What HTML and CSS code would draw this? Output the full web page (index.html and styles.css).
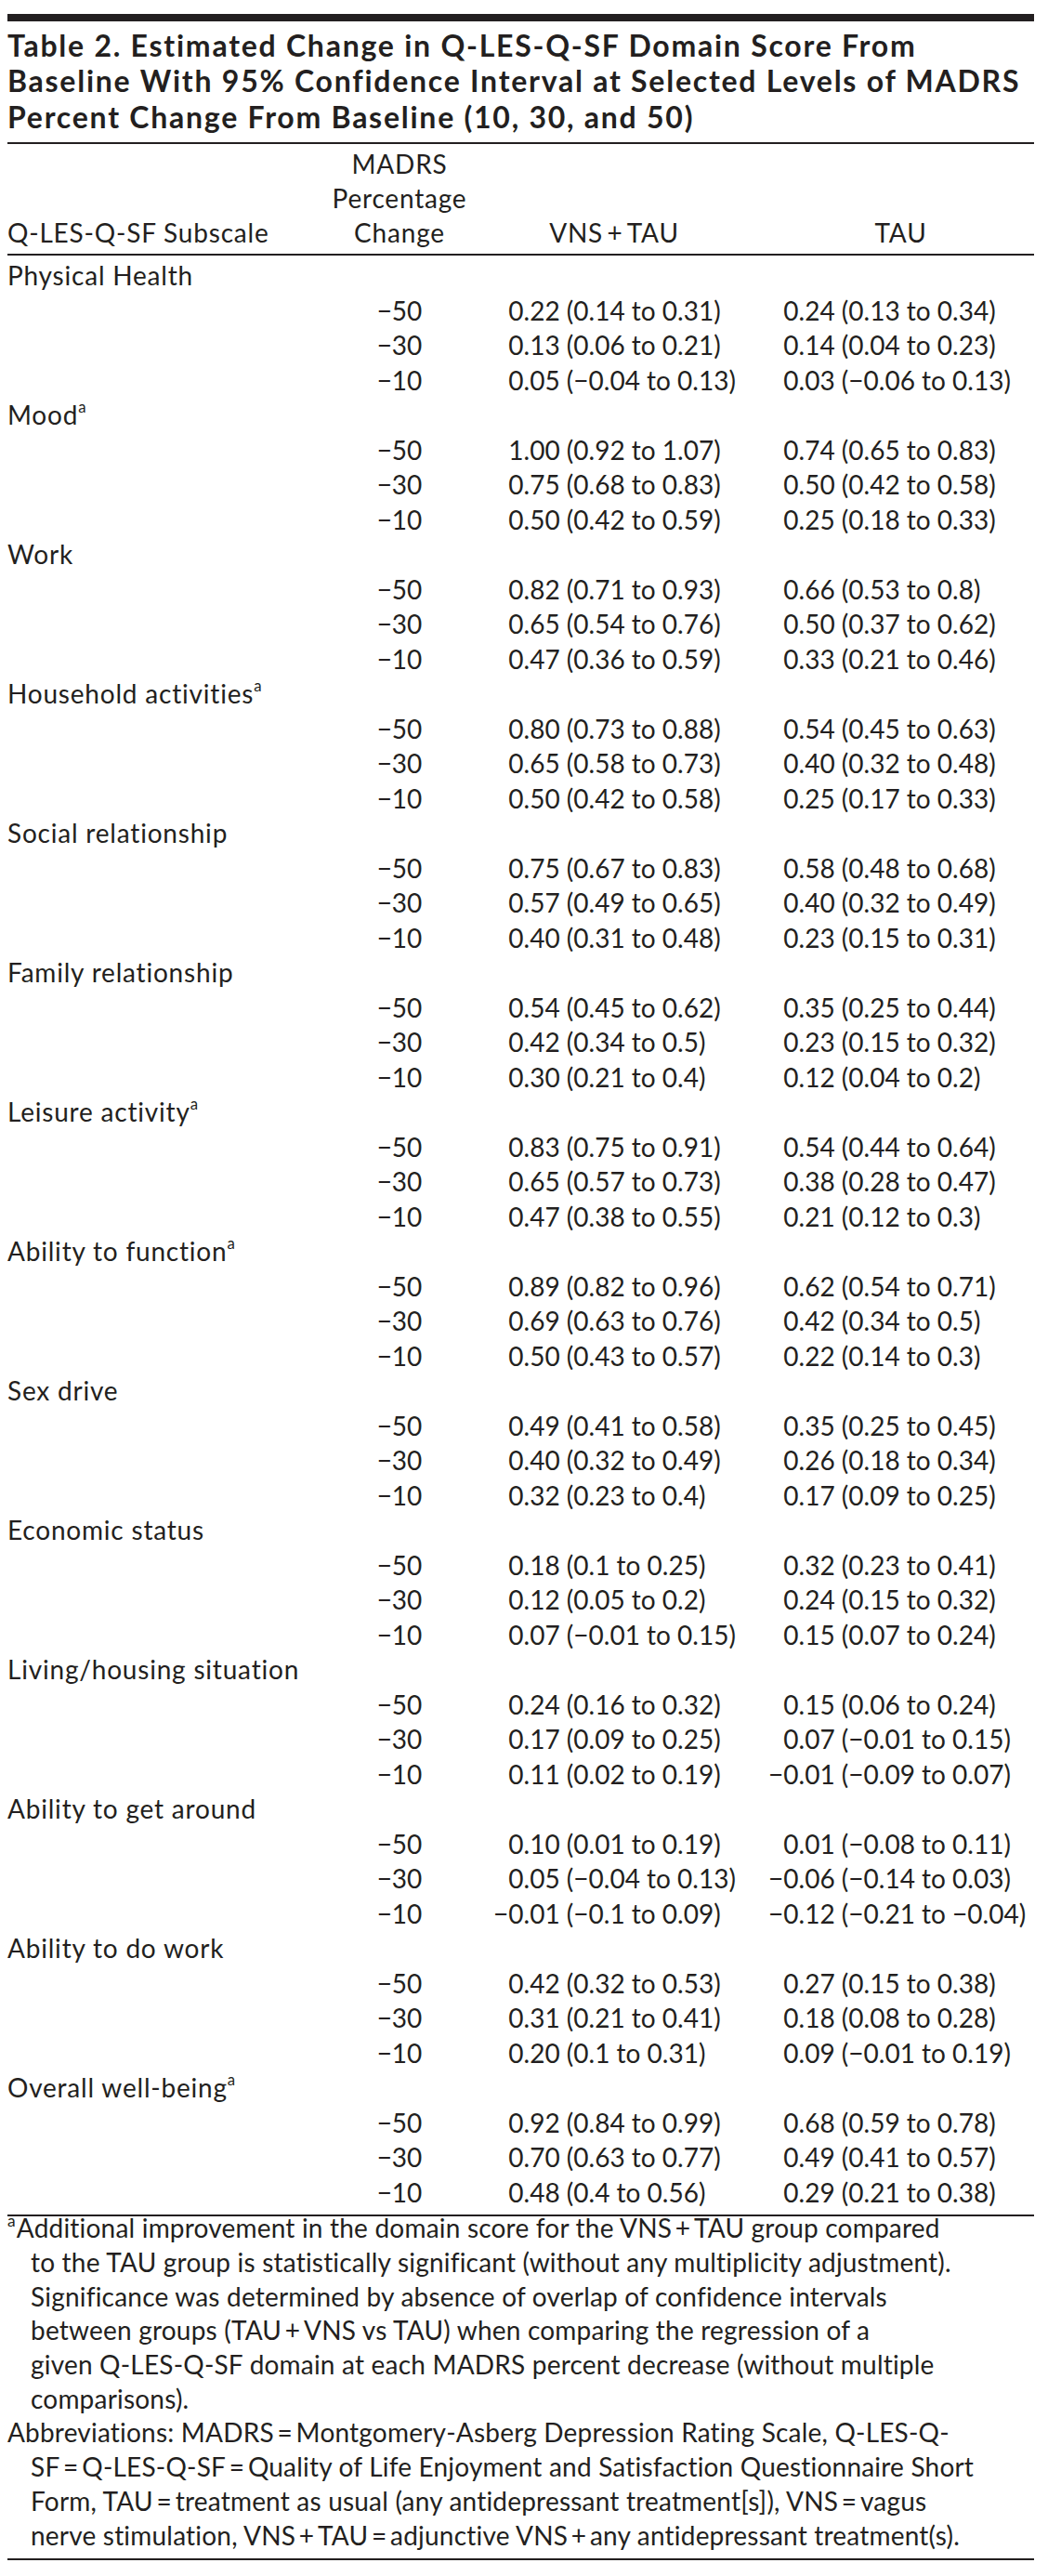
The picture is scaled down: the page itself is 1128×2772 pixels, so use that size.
FILE: index.html
```html
<!DOCTYPE html>
<html lang="en">
<head>
<meta charset="utf-8">
<title>Table 2</title>
<link rel="stylesheet" href="styles.css">
</head>
<body>
<div class="page">
  <div class="topbar"></div>
  <h1 class="title">Table 2. Estimated Change in Q-LES-Q-SF Domain Score From<br>Baseline With 95% Confidence Interval at Selected Levels of MADRS<br>Percent Change From Baseline (10, 30, and 50)</h1>
  <table class="data">
    <colgroup>
      <col class="w1"><col class="w2"><col class="w3"><col class="w4">
    </colgroup>
    <thead>
      <tr>
        <th class="h1">Q-LES-Q-SF Subscale</th>
        <th class="h2">MADRS<br>Percentage<br>Change</th>
        <th class="h3">VNS&#8201;+&#8201;TAU</th>
        <th class="h4">TAU</th>
      </tr>
    </thead>
    <tbody>
      <tr><td class="sec" colspan="4">Physical Health</td></tr>
      <tr><td></td><td class="m">−50</td><td class="v"><span class="i">0</span>.22 (0.14 to 0.31)</td><td class="v"><span class="i">0</span>.24 (0.13 to 0.34)</td></tr>
      <tr><td></td><td class="m">−30</td><td class="v"><span class="i">0</span>.13 (0.06 to 0.21)</td><td class="v"><span class="i">0</span>.14 (0.04 to 0.23)</td></tr>
      <tr><td></td><td class="m">−10</td><td class="v"><span class="i">0</span>.05 (−0.04 to 0.13)</td><td class="v"><span class="i">0</span>.03 (−0.06 to 0.13)</td></tr>

      <tr><td class="sec" colspan="4">Mood<span class="sup">a</span></td></tr>
      <tr><td></td><td class="m">−50</td><td class="v"><span class="i">1</span>.00 (0.92 to 1.07)</td><td class="v"><span class="i">0</span>.74 (0.65 to 0.83)</td></tr>
      <tr><td></td><td class="m">−30</td><td class="v"><span class="i">0</span>.75 (0.68 to 0.83)</td><td class="v"><span class="i">0</span>.50 (0.42 to 0.58)</td></tr>
      <tr><td></td><td class="m">−10</td><td class="v"><span class="i">0</span>.50 (0.42 to 0.59)</td><td class="v"><span class="i">0</span>.25 (0.18 to 0.33)</td></tr>

      <tr><td class="sec" colspan="4">Work</td></tr>
      <tr><td></td><td class="m">−50</td><td class="v"><span class="i">0</span>.82 (0.71 to 0.93)</td><td class="v"><span class="i">0</span>.66 (0.53 to 0.8)</td></tr>
      <tr><td></td><td class="m">−30</td><td class="v"><span class="i">0</span>.65 (0.54 to 0.76)</td><td class="v"><span class="i">0</span>.50 (0.37 to 0.62)</td></tr>
      <tr><td></td><td class="m">−10</td><td class="v"><span class="i">0</span>.47 (0.36 to 0.59)</td><td class="v"><span class="i">0</span>.33 (0.21 to 0.46)</td></tr>

      <tr><td class="sec" colspan="4">Household activities<span class="sup">a</span></td></tr>
      <tr><td></td><td class="m">−50</td><td class="v"><span class="i">0</span>.80 (0.73 to 0.88)</td><td class="v"><span class="i">0</span>.54 (0.45 to 0.63)</td></tr>
      <tr><td></td><td class="m">−30</td><td class="v"><span class="i">0</span>.65 (0.58 to 0.73)</td><td class="v"><span class="i">0</span>.40 (0.32 to 0.48)</td></tr>
      <tr><td></td><td class="m">−10</td><td class="v"><span class="i">0</span>.50 (0.42 to 0.58)</td><td class="v"><span class="i">0</span>.25 (0.17 to 0.33)</td></tr>

      <tr><td class="sec" colspan="4">Social relationship</td></tr>
      <tr><td></td><td class="m">−50</td><td class="v"><span class="i">0</span>.75 (0.67 to 0.83)</td><td class="v"><span class="i">0</span>.58 (0.48 to 0.68)</td></tr>
      <tr><td></td><td class="m">−30</td><td class="v"><span class="i">0</span>.57 (0.49 to 0.65)</td><td class="v"><span class="i">0</span>.40 (0.32 to 0.49)</td></tr>
      <tr><td></td><td class="m">−10</td><td class="v"><span class="i">0</span>.40 (0.31 to 0.48)</td><td class="v"><span class="i">0</span>.23 (0.15 to 0.31)</td></tr>

      <tr><td class="sec" colspan="4">Family relationship</td></tr>
      <tr><td></td><td class="m">−50</td><td class="v"><span class="i">0</span>.54 (0.45 to 0.62)</td><td class="v"><span class="i">0</span>.35 (0.25 to 0.44)</td></tr>
      <tr><td></td><td class="m">−30</td><td class="v"><span class="i">0</span>.42 (0.34 to 0.5)</td><td class="v"><span class="i">0</span>.23 (0.15 to 0.32)</td></tr>
      <tr><td></td><td class="m">−10</td><td class="v"><span class="i">0</span>.30 (0.21 to 0.4)</td><td class="v"><span class="i">0</span>.12 (0.04 to 0.2)</td></tr>

      <tr><td class="sec" colspan="4">Leisure activity<span class="sup">a</span></td></tr>
      <tr><td></td><td class="m">−50</td><td class="v"><span class="i">0</span>.83 (0.75 to 0.91)</td><td class="v"><span class="i">0</span>.54 (0.44 to 0.64)</td></tr>
      <tr><td></td><td class="m">−30</td><td class="v"><span class="i">0</span>.65 (0.57 to 0.73)</td><td class="v"><span class="i">0</span>.38 (0.28 to 0.47)</td></tr>
      <tr><td></td><td class="m">−10</td><td class="v"><span class="i">0</span>.47 (0.38 to 0.55)</td><td class="v"><span class="i">0</span>.21 (0.12 to 0.3)</td></tr>

      <tr><td class="sec" colspan="4">Ability to function<span class="sup">a</span></td></tr>
      <tr><td></td><td class="m">−50</td><td class="v"><span class="i">0</span>.89 (0.82 to 0.96)</td><td class="v"><span class="i">0</span>.62 (0.54 to 0.71)</td></tr>
      <tr><td></td><td class="m">−30</td><td class="v"><span class="i">0</span>.69 (0.63 to 0.76)</td><td class="v"><span class="i">0</span>.42 (0.34 to 0.5)</td></tr>
      <tr><td></td><td class="m">−10</td><td class="v"><span class="i">0</span>.50 (0.43 to 0.57)</td><td class="v"><span class="i">0</span>.22 (0.14 to 0.3)</td></tr>

      <tr><td class="sec" colspan="4">Sex drive</td></tr>
      <tr><td></td><td class="m">−50</td><td class="v"><span class="i">0</span>.49 (0.41 to 0.58)</td><td class="v"><span class="i">0</span>.35 (0.25 to 0.45)</td></tr>
      <tr><td></td><td class="m">−30</td><td class="v"><span class="i">0</span>.40 (0.32 to 0.49)</td><td class="v"><span class="i">0</span>.26 (0.18 to 0.34)</td></tr>
      <tr><td></td><td class="m">−10</td><td class="v"><span class="i">0</span>.32 (0.23 to 0.4)</td><td class="v"><span class="i">0</span>.17 (0.09 to 0.25)</td></tr>

      <tr><td class="sec" colspan="4">Economic status</td></tr>
      <tr><td></td><td class="m">−50</td><td class="v"><span class="i">0</span>.18 (0.1 to 0.25)</td><td class="v"><span class="i">0</span>.32 (0.23 to 0.41)</td></tr>
      <tr><td></td><td class="m">−30</td><td class="v"><span class="i">0</span>.12 (0.05 to 0.2)</td><td class="v"><span class="i">0</span>.24 (0.15 to 0.32)</td></tr>
      <tr><td></td><td class="m">−10</td><td class="v"><span class="i">0</span>.07 (−0.01 to 0.15)</td><td class="v"><span class="i">0</span>.15 (0.07 to 0.24)</td></tr>

      <tr><td class="sec" colspan="4">Living/housing situation</td></tr>
      <tr><td></td><td class="m">−50</td><td class="v"><span class="i">0</span>.24 (0.16 to 0.32)</td><td class="v"><span class="i">0</span>.15 (0.06 to 0.24)</td></tr>
      <tr><td></td><td class="m">−30</td><td class="v"><span class="i">0</span>.17 (0.09 to 0.25)</td><td class="v"><span class="i">0</span>.07 (−0.01 to 0.15)</td></tr>
      <tr><td></td><td class="m">−10</td><td class="v"><span class="i">0</span>.11 (0.02 to 0.19)</td><td class="v"><span class="i">−0</span>.01 (−0.09 to 0.07)</td></tr>

      <tr><td class="sec" colspan="4">Ability to get around</td></tr>
      <tr><td></td><td class="m">−50</td><td class="v"><span class="i">0</span>.10 (0.01 to 0.19)</td><td class="v"><span class="i">0</span>.01 (−0.08 to 0.11)</td></tr>
      <tr><td></td><td class="m">−30</td><td class="v"><span class="i">0</span>.05 (−0.04 to 0.13)</td><td class="v"><span class="i">−0</span>.06 (−0.14 to 0.03)</td></tr>
      <tr><td></td><td class="m">−10</td><td class="v"><span class="i">−0</span>.01 (−0.1 to 0.09)</td><td class="v"><span class="i">−0</span>.12 (−0.21 to −0.04)</td></tr>

      <tr><td class="sec" colspan="4">Ability to do work</td></tr>
      <tr><td></td><td class="m">−50</td><td class="v"><span class="i">0</span>.42 (0.32 to 0.53)</td><td class="v"><span class="i">0</span>.27 (0.15 to 0.38)</td></tr>
      <tr><td></td><td class="m">−30</td><td class="v"><span class="i">0</span>.31 (0.21 to 0.41)</td><td class="v"><span class="i">0</span>.18 (0.08 to 0.28)</td></tr>
      <tr><td></td><td class="m">−10</td><td class="v"><span class="i">0</span>.20 (0.1 to 0.31)</td><td class="v"><span class="i">0</span>.09 (−0.01 to 0.19)</td></tr>

      <tr><td class="sec" colspan="4">Overall well-being<span class="sup">a</span></td></tr>
      <tr><td></td><td class="m">−50</td><td class="v"><span class="i">0</span>.92 (0.84 to 0.99)</td><td class="v"><span class="i">0</span>.68 (0.59 to 0.78)</td></tr>
      <tr><td></td><td class="m">−30</td><td class="v"><span class="i">0</span>.70 (0.63 to 0.77)</td><td class="v"><span class="i">0</span>.49 (0.41 to 0.57)</td></tr>
      <tr class="last"><td></td><td class="m">−10</td><td class="v"><span class="i">0</span>.48 (0.4 to 0.56)</td><td class="v"><span class="i">0</span>.29 (0.21 to 0.38)</td></tr>
    </tbody>
  </table>
  <div class="notes">
    <p class="note"><span class="nsup">a</span>Additional improvement in the domain score for the VNS&#8201;+&#8201;TAU group compared<br>to the TAU group is statistically significant (without any multiplicity adjustment).<br>Significance was determined by absence of overlap of confidence intervals<br>between groups (TAU&#8201;+&#8201;VNS vs TAU) when comparing the regression of a<br>given Q-LES-Q-SF domain at each MADRS percent decrease (without multiple<br>comparisons).</p>
    <p class="note">Abbreviations: MADRS&#8201;=&#8201;Montgomery-Asberg Depression Rating Scale, Q-LES-Q-<br>SF&#8201;=&#8201;Q-LES-Q-SF&#8201;=&#8201;Quality of Life Enjoyment and Satisfaction Questionnaire Short<br>Form, TAU&#8201;=&#8201;treatment as usual (any antidepressant treatment[s]), VNS&#8201;=&#8201;vagus<br>nerve stimulation, VNS&#8201;+&#8201;TAU&#8201;=&#8201;adjunctive VNS&#8201;+&#8201;any antidepressant treatment(s).</p>
  </div>
</div>
</body>
</html>
```

FILE: styles.css
```css
html, body {
  margin: 0;
  padding: 0;
  background: #ffffff;
}

body {
  font-family: Lato, "Open Sans", sans-serif;
  color: #231f20;
}

.page {
  width: 1105px;
  padding: 15px 0 0 8px;
}

.topbar {
  height: 8px;
  background: #231f20;
}

.title {
  margin: 7px 0 0 0;
  padding: 0 0 8px 0;
  border-bottom: 2px solid #231f20;
  font-size: 32px;
  line-height: 38.4px;
  font-weight: 700;
  letter-spacing: 1.75px;
  white-space: nowrap;
}

.data {
  width: 1105px;
  table-layout: fixed;
  border-collapse: collapse;
  font-size: 28px;
  line-height: 37.5px;
}

.w1 { width: 322px; }
.w2 { width: 200px; }
.w3 { width: 296px; }
.w4 { width: 287px; }

.data th {
  font-weight: 400;
  line-height: 37px;
  padding: 3px 0 4px 0;
  vertical-align: bottom;
  border-bottom: 2px solid #231f20;
  white-space: nowrap;
  letter-spacing: 0.8px;
}

.h1 { text-align: left; }
.h2 { text-align: center; }
.h3 { text-align: center; padding-right: 34px !important; }
.h4 { text-align: center; }

.data td {
  padding: 0;
  white-space: nowrap;
}

.data tbody tr:first-child td {
  padding-top: 3px;
}

.data tr.last td {
  padding-bottom: 5px;
}

.sec {
  text-align: left;
  letter-spacing: 0.8px;
}

.m {
  text-align: center;
}

.v {
  text-align: left;
}

.i {
  display: inline-block;
  width: 1.2em;
  text-align: right;
}

.sup {
  font-size: 0.6em;
  line-height: 0;
  vertical-align: 0.75em;
}

.notes {
  border-top: 2px solid #231f20;
  border-bottom: 2px solid #231f20;
  padding: 0 0 7px 0;
}

.note {
  margin: 0;
  font-size: 28px;
  line-height: 36.7px;
  letter-spacing: 0.2px;
  padding-left: 25px;
  text-indent: -25px;
  white-space: nowrap;
}

.note:first-child {
  margin-top: -6px;
}

.nsup {
  font-size: 0.62em;
  line-height: 0;
  vertical-align: 0.7em;
  margin-right: 1px;
}
```
